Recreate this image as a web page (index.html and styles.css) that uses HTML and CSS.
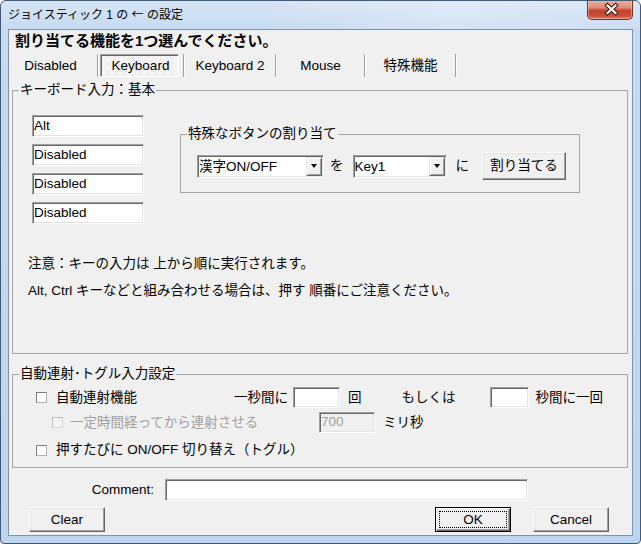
FILE: index.html
```html
<!DOCTYPE html>
<html lang="ja">
<head>
<meta charset="utf-8">
<title>ジョイスティック 1 の ← の設定</title>
<link rel="stylesheet" href="styles.css">
</head>
<body>
<div class="window">
  <div class="titlebar">
    <span class="title">ジョイスティック 1 の <span class="cjk">←</span> の設定</span>
    <div class="close">
      <svg width="46" height="19" viewBox="0 0 46 19">
        <path d="M19.5 5.5 L27.5 13 M27.5 5.5 L19.5 13" stroke="#3d1812" stroke-width="4.4" stroke-linecap="square" fill="none"/>
        <path d="M19.5 5.5 L27.5 13 M27.5 5.5 L19.5 13" stroke="#ffffff" stroke-width="2.2" stroke-linecap="square" fill="none"/>
      </svg>
    </div>
  </div>
  <div class="client">
    <div class="heading">割り当てる機能を1つ選んでください。</div>
    <div class="tabs">
      <div class="tab t1">Disabled</div><span class="sep"></span>
      <div class="tab t2"><span class="pressed">Keyboard</span></div><span class="sep"></span>
      <div class="tab t3">Keyboard 2</div><span class="sep"></span>
      <div class="tab t4">Mouse</div><span class="sep"></span>
      <div class="tab t5">特殊機能</div><span class="sep"></span>
    </div>

    <fieldset class="group g1">
      <legend>キーボード入力：基本</legend>
      <div class="kb-row">
        <div class="keys">
          <div class="field sunken">Alt</div>
          <div class="field sunken">Disabled</div>
          <div class="field sunken">Disabled</div>
          <div class="field sunken">Disabled</div>
        </div>
        <fieldset class="group sub">
          <legend>特殊なボタンの割り当て</legend>
          <div class="assign">
            <div class="combo c1 sunken"><span class="combo-text">漢字ON/OFF</span><span class="drop"><span class="arrow"></span></span></div>
            <span class="wo">を</span>
            <div class="combo c2 sunken"><span class="combo-text">Key1</span><span class="drop"><span class="arrow"></span></span></div>
            <span class="ni">に</span>
            <div class="btn assign-btn">割り当てる</div>
          </div>
        </fieldset>
      </div>
      <p class="note n1">注意：キーの入力は 上から順に実行されます。</p>
      <p class="note n2">Alt, Ctrl キーなどと組み合わせる場合は、押す 順番にご注意ください。</p>
    </fieldset>

    <fieldset class="group g2">
      <legend>自動連射･トグル入力設定</legend>
      <div class="row r1">
        <div class="cb cb1"><span class="chk"></span><span class="chk-label">自動連射機能</span></div>
        <span class="per">一秒間に</span>
        <div class="input sunken in1"></div>
        <span class="kai">回</span>
        <span class="moshiku">もしくは</span>
        <div class="input sunken in2"></div>
        <span class="byo">秒間に一回</span>
      </div>
      <div class="row r2">
        <div class="cb cb2"><span class="chk disabled"></span><span class="chk-label dis">一定時間経ってから連射させる</span></div>
        <div class="input sunken in700">700</div>
        <span class="miri">ミリ秒</span>
      </div>
      <div class="row r3">
        <div class="cb"><span class="chk"></span><span class="chk-label">押すたびに ON/OFF 切り替え（トグル）</span></div>
      </div>
    </fieldset>

    <div class="comment-row">
      <span class="comment-label">Comment:</span>
      <div class="input sunken comment-input"></div>
    </div>
    <div class="button-row">
      <div class="btn push clear">Clear</div>
      <div class="btn push default ok"><span class="focus">OK</span></div>
      <div class="btn push cancel">Cancel</div>
    </div>
  </div>
</div>
</body>
</html>
```
FILE: styles.css
```css
* { box-sizing: border-box; }

body {
  margin: 0;
  font-family: "Liberation Sans", "Noto Sans CJK JP", sans-serif;
  font-size: 13.5px;
  line-height: 16px;
  color: #000;
  background: #fff;
}

.cjk { font-family: "Noto Sans CJK JP", sans-serif; }

.window {
  width: 641px;
  height: 544px;
  border: 1px solid #42597a;
  border-radius: 6px 6px 4px 4px;
  background: linear-gradient(180deg, #d6e5f6 0, #c7daf0 28px, #bfd4ed 100%);
  padding: 0 7px 7px;
  display: flex;
  flex-direction: column;
  overflow: hidden;
}

.titlebar {
  height: 28px;
  flex: none;
  display: flex;
  align-items: flex-start;
  margin: 0 -7px;
  padding-left: 7px;
  background: linear-gradient(100deg, rgba(255,255,255,0) 40%, rgba(255,255,255,0.25) 70%, rgba(255,255,255,0.1) 100%);
}

.title {
  font-size: 12px;
  line-height: 16px;
  margin-top: 5px;
  color: #000;
}

.close {
  margin-left: auto;
  margin-right: 7px;
  margin-top: -1px;
  width: 46px;
  height: 20px;
  border: 1px solid #7a2f22;
  border-top: none;
  border-radius: 0 0 5px 5px;
  background: linear-gradient(180deg, #eab1a3 0%, #dc8d79 40%, #c5452e 55%, #c94b33 80%, #dc7a60 100%);
  box-shadow: inset 0 0 0 1px rgba(255,255,255,0.35);
}

.close svg { display: block; }

.client {
  flex: 1;
  border: 1px solid #7d93ae;
  background: #f0f0f0;
  display: flex;
  flex-direction: column;
}

.heading {
  font-weight: bold;
  font-size: 15px;
  line-height: 18px;
  padding: 2px 0 0 6px;
}

.tabs {
  display: flex;
  height: 23px;
  margin-top: 4px;
}

.tab {
  height: 23px;
  display: flex;
  align-items: center;
  justify-content: center;
}

.t1 { width: 88px; padding-right: 5px; }
.t2 { width: 84px; justify-content: flex-start; padding-left: 1px; }
.t3 { width: 90px; }
.t4 { width: 87px; }
.t5 { width: 89px; }

.pressed {
  width: 79px;
  height: 23px;
  border: 1px solid;
  border-color: #a0a0a0 #fff #fff #a0a0a0;
  box-shadow: inset 1px 1px #696969;
  background: repeating-conic-gradient(#ffffff 0 25%, #e9e9e9 0 50%) 0 0 / 2px 2px;
  display: flex;
  align-items: center;
  justify-content: center;
  padding: 1px 0 0 2px;
}

.sep {
  width: 2px;
  height: 23px;
  border-left: 1px solid #a0a0a0;
  border-right: 1px solid #fff;
}

.group {
  margin: 5px 0 0 3px;
  width: 616px;
  border: 1px solid #a4a4a4;
  padding: 0;
  min-width: 0;
}

.group legend {
  margin-left: 6px;
  padding: 0 1px;
  line-height: 16px;
}

.g1 { height: 272px; padding-top: 17px; }

.kb-row {
  display: flex;
  align-items: flex-start;
}

.keys {
  margin-left: 19px;
  display: flex;
  flex-direction: column;
  gap: 7px;
}

.sunken {
  border: 1px solid;
  border-color: #a0a0a0 #fff #fff #a0a0a0;
  box-shadow: inset 1px 1px #696969, inset -1px -1px #e3e3e3;
  background: #fff;
}

.field {
  width: 112px;
  height: 22px;
  line-height: 19px;
  padding-left: 1px;
}

.group.sub {
  margin: 11px 0 0 36px;
  width: 400px;
  padding: 10px 0 12px;
}

.assign {
  display: flex;
  align-items: center;
  height: 28px;
  padding-left: 16px;
}

.combo {
  height: 23px;
  padding: 1px;
  display: flex;
}

.c1 { width: 127px; }
.c2 { width: 94px; }

.combo-text {
  flex: 1;
  line-height: 19px;
  padding-left: 0;
  white-space: nowrap;
}

.drop {
  width: 16px;
  height: 19px;
  flex: none;
  background: #f0f0f0;
  border: 1px solid;
  border-color: #e3e3e3 #696969 #696969 #e3e3e3;
  box-shadow: inset 1px 1px #fff, inset -1px -1px #a0a0a0;
  display: flex;
  align-items: center;
  justify-content: center;
}

.arrow {
  width: 1px;
  height: 0;
  border-left: 3px solid transparent;
  border-right: 3px solid transparent;
  border-top: 4px solid #000;
}

.wo { margin: 0 9px 0 6px; }
.ni { margin: 0 13px 0 9px; }

.btn {
  background: #f0f0f0;
  border: 1px solid;
  border-color: #fff #696969 #696969 #fff;
  box-shadow: inset -1px -1px #a0a0a0, inset 1px 1px #e3e3e3;
  display: flex;
  align-items: center;
  justify-content: center;
}

.assign-btn {
  width: 84px;
  height: 28px;
}

.note {
  margin: 0;
  padding-left: 15px;
}

.n1 { margin-top: 32px; }
.n2 { margin-top: 11px; }

.g2 {
  margin-top: 12px;
  height: 102px;
  padding-top: 5px;
}

.row {
  display: flex;
  align-items: center;
}

.r1 { height: 21px; padding-left: 23px; }
.r2 { height: 21px; padding-left: 39px; margin-top: 4px; }
.r3 { height: 16px; padding-left: 23px; margin-top: 9px; }

.cb {
  display: flex;
  align-items: center;
  flex: none;
}

.cb1 { width: 192px; }
.cb2 { width: 267px; }

.chk {
  width: 11px;
  height: 11px;
  flex: none;
  border: 1px solid;
  border-color: #7c7c7c #b0b0b0 #b0b0b0 #7c7c7c;
  background: #fff;
}

.chk.disabled {
  border-color: #bdbdbd #d6d6d6 #d6d6d6 #bdbdbd;
  background: #f4f4f4;
}

.chk-label { margin-left: 9px; white-space: nowrap; }
.chk-label.dis { margin-left: 7px; color: #a0a0a0; }

.per { width: 60px; text-align: right; flex: none; }

.input { height: 21px; flex: none; }

.in1 { width: 47px; margin-left: 5px; }
.kai { margin-left: 8px; }
.moshiku { margin-left: 40px; width: 88px; flex: none; }
.in2 { width: 39px; }
.byo { margin-left: 7px; }

.in700 {
  width: 56px;
  background: #f0f0f0;
  color: #a0a0a0;
  line-height: 18px;
  padding-left: 1px;
}

.miri { margin-left: 8px; }

.comment-row {
  display: flex;
  align-items: center;
  height: 22px;
  margin-top: 11px;
}

.comment-label {
  width: 145px;
  text-align: right;
}

.comment-input {
  width: 363px;
  height: 22px;
  margin-left: 11px;
}

.button-row {
  display: flex;
  height: 25px;
  margin-top: 6px;
  padding-left: 20px;
}

.push {
  width: 76px;
  height: 25px;
}

.ok { margin-left: 330px; }
.cancel { margin-left: 22px; }

.btn.default {
  border: 1px solid #000;
  box-shadow: inset 1px 1px #fff, inset -1px -1px #696969, inset -2px -2px #a0a0a0;
  padding: 3px;
}

.focus {
  width: 100%;
  height: 100%;
  border: 1px dotted #000;
  display: flex;
  align-items: center;
  justify-content: center;
}
```
